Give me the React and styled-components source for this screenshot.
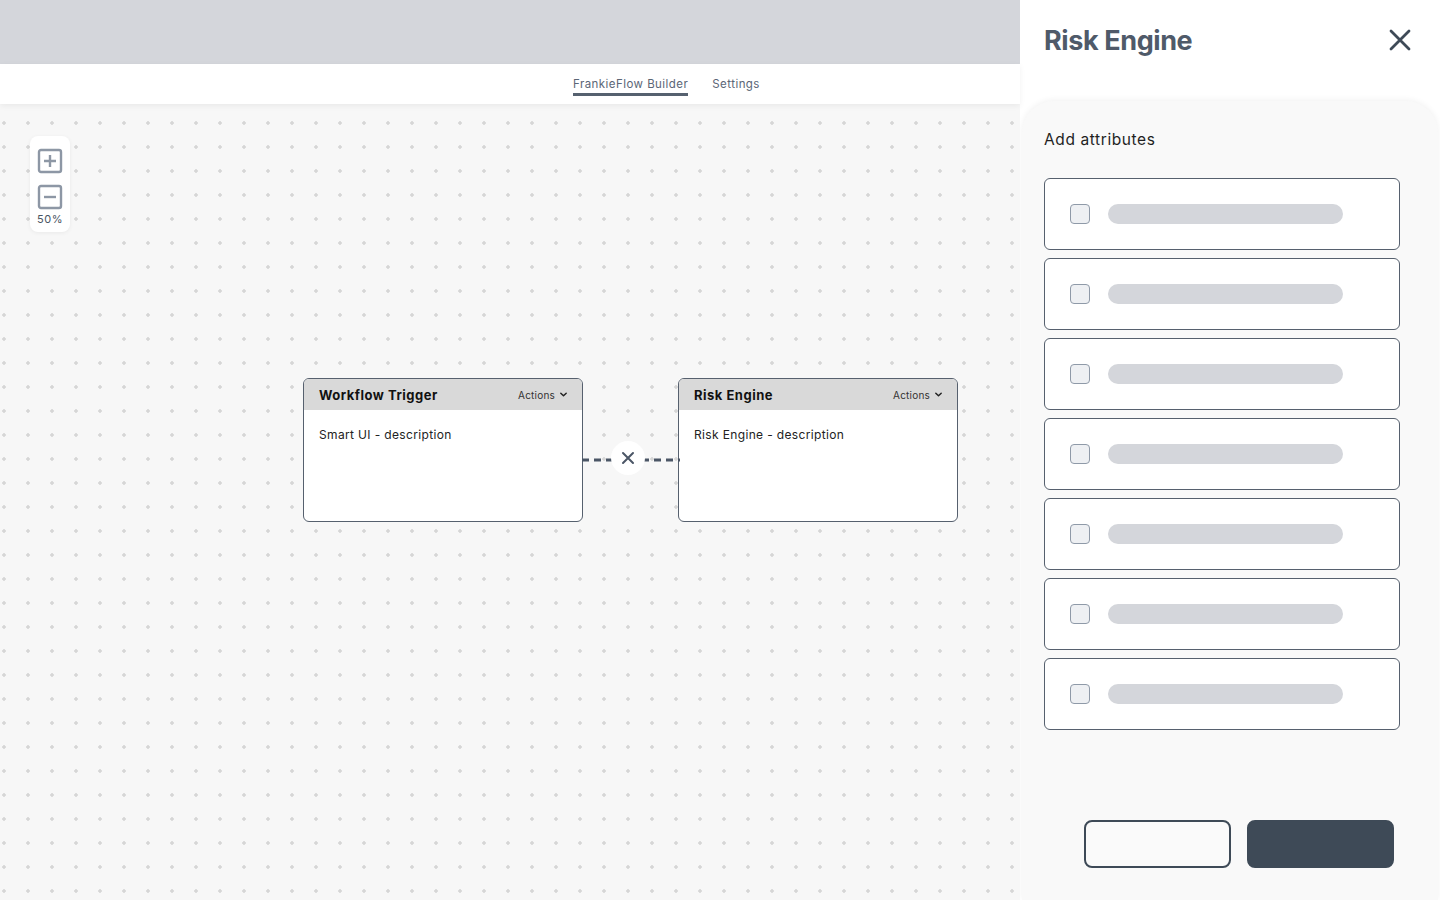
import React from "react";
import styled, { createGlobalStyle } from "styled-components";

const GlobalStyle = createGlobalStyle`
  html, body {
    margin: 0;
    padding: 0;
    height: 100%;
  }
  body {
    font-family: Inter, "Open Sans", "Liberation Sans", sans-serif;
    color: #2d3748;
    overflow: hidden;
  }
  * { box-sizing: border-box; }
`;

const Page = styled.div`
  display: flex;
  width: 1440px;
  height: 900px;
`;

const Workspace = styled.div`
  display: flex;
  flex-direction: column;
  width: 1020px;
  height: 100%;
`;

const TopBar = styled.div`
  height: 64px;
  background: #d4d6db;
  flex-shrink: 0;
`;

const TabBar = styled.nav`
  height: 40px;
  background: #fff;
  display: flex;
  align-items: flex-start;
  gap: 24px;
  padding-left: 573px;
  padding-top: 13px;
  box-shadow: 0 2px 6px rgba(0, 0, 0, 0.06);
  position: relative;
  z-index: 2;
  flex-shrink: 0;
`;

const Tab = styled.span`
  font-size: 11.5px;
  line-height: 14px;
  letter-spacing: 0.45px;
  color: #5b6676;
  padding-bottom: 2px;
  border-bottom: 3px solid ${(p) => (p.active ? "#56616f" : "transparent")};
`;

const Canvas = styled.div`
  flex: 1;
  position: relative;
  background-color: #f7f7f7;
  background-image: radial-gradient(circle, #d6d6d6 1.5px, transparent 1.9px);
  background-size: 24px 24px;
  background-position: -8px 7px;
`;

const ZoomBox = styled.div`
  position: absolute;
  left: 30px;
  top: 32px;
  width: 40px;
  height: 96px;
  background: #fff;
  border-radius: 8px;
  box-shadow: 0 1px 4px rgba(0, 0, 0, 0.06);
  display: flex;
  flex-direction: column;
  align-items: center;
  padding-top: 12px;
  gap: 10px;
`;

const ZoomButton = styled.svg`
  width: 26px;
  height: 26px;
  display: block;
`;

const ZoomLabel = styled.span`
  font-size: 11px;
  letter-spacing: 0.5px;
  color: #4a5563;
  margin-top: -8px;
`;

const Node = styled.div`
  position: absolute;
  left: ${(p) => p.x}px;
  top: ${(p) => p.y}px;
  width: 280px;
  height: 144px;
  background: #fff;
  border: 1px solid #56606e;
  border-radius: 6px;
  overflow: hidden;
  display: flex;
  flex-direction: column;
`;

const NodeHead = styled.div`
  height: 31px;
  background: #d9d9d9;
  display: flex;
  align-items: center;
  justify-content: space-between;
  padding: 0 14px 0 15px;
`;

const NodeTitle = styled.span`
  font-size: 13px;
  font-weight: 700;
  letter-spacing: 0.5px;
  color: #111;
`;

const Actions = styled.span`
  display: flex;
  align-items: center;
  gap: 4px;
  font-size: 10px;
  letter-spacing: 0.2px;
  color: #333;
`;

const NodeBody = styled.div`
  padding: 17px 15px;
  font-size: 12px;
  letter-spacing: 0.35px;
  color: #222;
`;

const Edge = styled.svg`
  position: absolute;
  left: 582px;
  top: 335px;
  width: 98px;
  height: 40px;
`;

const Panel = styled.aside`
  width: 420px;
  height: 100%;
  background: #fff;
  display: flex;
  flex-direction: column;
`;

const PanelHead = styled.header`
  height: 80px;
  display: flex;
  align-items: center;
  justify-content: space-between;
  padding: 0 28px 0 24px;
  flex-shrink: 0;
`;

const PanelTitle = styled.h1`
  margin: 0;
  font-family: Inter, "Liberation Sans", sans-serif;
  font-size: 27px;
  font-weight: 700;
  letter-spacing: -0.4px;
  color: #4f5a69;
`;

const CloseButton = styled.button`
  border: 0;
  background: none;
  padding: 0;
  cursor: pointer;
  display: flex;
`;

const PanelCard = styled.section`
  flex: 1;
  margin: 21px 2px 0 2px;
  background: #f9f9f9;
  border-radius: 32px 32px 0 0;
  box-shadow: 0 -1px 6px rgba(0, 0, 0, 0.06);
  display: flex;
  flex-direction: column;
  padding: 29px 38px 32px 22px;
`;

const SectionLabel = styled.div`
  font-size: 15.5px;
  line-height: 20px;
  letter-spacing: 0.6px;
  color: #1f1f1f;
  margin-bottom: 28px;
`;

const AttrList = styled.div`
  display: flex;
  flex-direction: column;
  gap: 8px;
`;

const AttrRow = styled.label`
  height: 72px;
  background: #fff;
  border: 1px solid #56606e;
  border-radius: 6px;
  display: flex;
  align-items: center;
  padding-left: 25px;
  gap: 18px;
`;

const Check = styled.span`
  width: 20px;
  height: 20px;
  border: 1px solid #8f9aa8;
  border-radius: 4px;
  background: #eef0f3;
`;

const Skeleton = styled.span`
  width: 235px;
  height: 20px;
  border-radius: 10px;
  background: #d4d6db;
`;

const Footer = styled.div`
  margin-top: auto;
  display: flex;
  justify-content: flex-end;
  gap: 16px;
  padding-right: 6px;
`;

const Button = styled.button`
  width: 147px;
  height: 48px;
  border-radius: 8px;
  border: 2px solid #3e4a57;
  background: ${(p) => (p.primary ? "#3e4a57" : "#fafafa")};
`;

const Chevron = () => (
  <svg width="9" height="9" viewBox="0 0 10 10">
    <path d="M2 3.5l3 3 3-3" fill="none" stroke="#222" strokeWidth="1.6" strokeLinecap="round" strokeLinejoin="round" />
  </svg>
);

const nodes = [
  { id: "trigger", x: 303, y: 274, title: "Workflow Trigger", body: "Smart UI - description" },
  { id: "risk", x: 678, y: 274, title: "Risk Engine", body: "Risk Engine - description" },
];

const attributes = [1, 2, 3, 4, 5, 6, 7];

export default function App() {
  return (
    <>
      <GlobalStyle />
      <Page>
        <Workspace>
          <TopBar />
          <TabBar>
            <Tab active>FrankieFlow Builder</Tab>
            <Tab>Settings</Tab>
          </TabBar>
          <Canvas>
            <ZoomBox>
              <ZoomButton viewBox="0 0 26 26">
                <rect x="2" y="2" width="22" height="22" rx="2" fill="none" stroke="#8d97a5" strokeWidth="2.4" />
                <path d="M13 7v12M7 13h12" stroke="#8d97a5" strokeWidth="2.4" />
              </ZoomButton>
              <ZoomButton viewBox="0 0 26 26">
                <rect x="2" y="2" width="22" height="22" rx="2" fill="none" stroke="#8d97a5" strokeWidth="2.4" />
                <path d="M7 13h12" stroke="#8d97a5" strokeWidth="2.4" />
              </ZoomButton>
              <ZoomLabel>50%</ZoomLabel>
            </ZoomBox>

            {nodes.map((n) => (
              <Node key={n.id} x={n.x} y={n.y}>
                <NodeHead>
                  <NodeTitle>{n.title}</NodeTitle>
                  <Actions>
                    Actions <Chevron />
                  </Actions>
                </NodeHead>
                <NodeBody>{n.body}</NodeBody>
              </Node>
            ))}

            <Edge viewBox="0 0 98 40">
              <line x1="0" y1="21" x2="98" y2="21" stroke="#4b5666" strokeWidth="3" strokeDasharray="7 5" />
              <circle cx="46" cy="19" r="17" fill="#fff" />
              <path d="M41 14l10 10M51 14l-10 10" stroke="#4b5666" strokeWidth="2" strokeLinecap="round" />
            </Edge>
          </Canvas>
        </Workspace>

        <Panel>
          <PanelHead>
            <PanelTitle>Risk Engine</PanelTitle>
            <CloseButton aria-label="Close">
              <svg width="24" height="24" viewBox="0 0 24 24">
                <path d="M3 3l18 18M21 3L3 21" stroke="#3e4a57" strokeWidth="2.8" strokeLinecap="round" />
              </svg>
            </CloseButton>
          </PanelHead>
          <PanelCard>
            <SectionLabel>Add attributes</SectionLabel>
            <AttrList>
              {attributes.map((a) => (
                <AttrRow key={a}>
                  <Check />
                  <Skeleton />
                </AttrRow>
              ))}
            </AttrList>
            <Footer>
              <Button />
              <Button primary />
            </Footer>
          </PanelCard>
        </Panel>
      </Page>
    </>
  );
}
